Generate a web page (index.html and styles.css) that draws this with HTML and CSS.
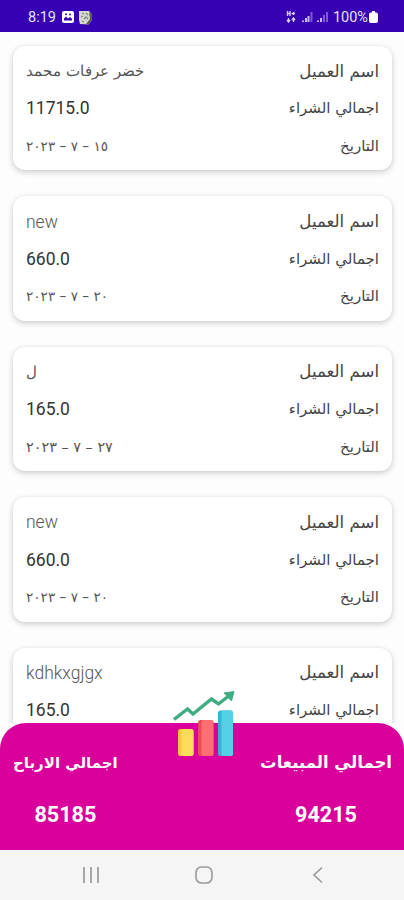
FILE: index.html
```
<!DOCTYPE html>
<html lang="ar">
  <head>
    <meta charset="UTF-8">
    <title>المبيعات</title>
    <link rel="stylesheet" href="styles.css">
  </head>

  <body>
    <div id="status">
      <span class="time">8:19</span>
      <svg class="picture" width="12" height="12" viewBox="0 0 12 12">
        <rect width="12" height="12" rx="2" fill="#fff"/>
        <path d="M2 9.5V7.5L4 5.5L6 7.5L8 6L10 8V9.5Z" fill="#3700b3"/>
        <circle cx="4" cy="3.3" r="1" fill="#3700b3"/>
        <circle cx="8" cy="3.6" r="1" fill="#3700b3"/>
      </svg>
      <svg class="ball" width="15" height="15" viewBox="0 0 15 15">
        <path d="M1 1H11L14 4.500V10L10.500 14.500L2 14L1 10Z" fill="#d5d8cf"/>
        <path d="M11 2L14 4.500V10L10.500 14.500L8 14L12 9Z" fill="#5d5a4c"/>
        <path d="M4 3L6 4M8 3L10 5M3 7L5 6M6 9L8 7L10 9M4 11L6 12" stroke="#85887d" stroke-width="1.300" fill="none"/>
      </svg>
      <svg class="network" width="44" height="12" viewBox="0 0 44 12">
        <path d="M1.500 0V5M1.500 2.500H4M4 0V5M5.500 2.500H9M7.500 1V4M2.500 7V11M1 9L2.500 11L4 9M7.500 11V7M6 9L7.500 7L9 9" stroke="#d9ccf1" stroke-width="1.400" fill="none"/>
        <path d="M17 11V9.500M20 11V7M22.500 11V5M32 11V9.500M35 11V7" stroke="#cbbbec" stroke-width="2" fill="none"/>
        <path d="M25.500 11V1M38 11V4M41 11V1" stroke="#7d58ce" stroke-width="2" fill="none"/>
      </svg>
      <span class="percent">100%</span>
      <svg class="battery" width="9" height="12" viewBox="0 0 9 12">
        <path d="M3 0H6V1.500H7Q9 1.500 9 3.500V10Q9 12 7 12H2Q0 12 0 10V3.500Q0 1.500 2 1.500H3Z" fill="#fff"/>
      </svg>
    </div>

    <div id="list">
      <div class="card">
        <div class="row"><span class="name ar" dir="rtl">خضر عرفات محمد</span><span class="label client" dir="rtl">اسم العميل</span></div>
        <div class="row"><span class="amount">11715.0</span><span class="label" dir="rtl">اجمالي الشراء</span></div>
        <div class="row"><span class="date" dir="rtl">١٥ – ٧ – ٢٠٢٣</span><span class="label" dir="rtl">التاريخ</span></div>
      </div>
      <div class="card">
        <div class="row"><span class="name">new</span><span class="label client" dir="rtl">اسم العميل</span></div>
        <div class="row"><span class="amount">660.0</span><span class="label" dir="rtl">اجمالي الشراء</span></div>
        <div class="row"><span class="date" dir="rtl">٢٠ – ٧ – ٢٠٢٣</span><span class="label" dir="rtl">التاريخ</span></div>
      </div>
      <div class="card">
        <div class="row"><span class="name ar" dir="rtl">ل</span><span class="label client" dir="rtl">اسم العميل</span></div>
        <div class="row"><span class="amount">165.0</span><span class="label" dir="rtl">اجمالي الشراء</span></div>
        <div class="row"><span class="date wide" dir="rtl">٢٧ – ٧ – ٢٠٢٣</span><span class="label" dir="rtl">التاريخ</span></div>
      </div>
      <div class="card">
        <div class="row"><span class="name">new</span><span class="label client" dir="rtl">اسم العميل</span></div>
        <div class="row"><span class="amount">660.0</span><span class="label" dir="rtl">اجمالي الشراء</span></div>
        <div class="row"><span class="date" dir="rtl">٢٠ – ٧ – ٢٠٢٣</span><span class="label" dir="rtl">التاريخ</span></div>
      </div>
      <div class="card">
        <div class="row"><span class="name">kdhkxgjgx</span><span class="label client" dir="rtl">اسم العميل</span></div>
        <div class="row"><span class="amount">165.0</span><span class="label" dir="rtl">اجمالي الشراء</span></div>
      </div>
    </div>

    <div id="totals">
      <div class="total profit">
        <div class="total__title" dir="rtl">اجمالي الارباح</div>
        <div class="total__value">85185</div>
      </div>
      <div class="total sales">
        <div class="total__title" dir="rtl">اجمالي المبيعات</div>
        <div class="total__value">94215</div>
      </div>
      <svg id="chart" width="64" height="66" viewBox="0 0 64 66">
        <path d="M2 29.500L15.500 19L21 24L39.500 9L46.500 14L58 5" stroke="#40ac82" stroke-width="3.400" fill="none"/>
        <path d="M52 3L62 1.500L59.500 11Z" fill="#40ac82" stroke="#40ac82" stroke-linejoin="round"/>
        <rect x="6" y="39" width="15.500" height="27" rx="2.500" fill="#f9c842"/>
        <rect x="9.500" y="39" width="12" height="27" rx="2.500" fill="#fddb5b"/>
        <rect x="26" y="30" width="15.500" height="36" rx="2.500" fill="#e94e58"/>
        <rect x="29.500" y="30" width="12" height="36" rx="2.500" fill="#ff6f71"/>
        <rect x="46" y="20.500" width="15" height="45.500" rx="2.500" fill="#35b4d2"/>
        <rect x="49.500" y="20.500" width="11.500" height="45.500" rx="2.500" fill="#55d0e4"/>
      </svg>
    </div>

    <div id="nav">
      <svg width="18" height="18" viewBox="0 0 18 18">
        <path d="M2 1V17M9 1V17M16 1V17" stroke="#999" stroke-width="1.700"/>
      </svg>
      <svg width="18" height="18" viewBox="0 0 18 18">
        <rect x="1" y="1" width="16" height="16" rx="5.500" stroke="#999" stroke-width="1.600" fill="none"/>
      </svg>
      <svg width="18" height="18" viewBox="0 0 18 18">
        <path d="M14 1.500L6 9L14 16.500" stroke="#999" stroke-width="1.600" fill="none"/>
      </svg>
    </div>
  </body>
</html>
```
FILE: styles.css
```
* {
  box-sizing: border-box;
}
html, body {
  margin: 0;
  padding: 0;
  height: 900px;
  width: 404px;
  overflow: hidden;
}
body {
  display: flex;
  flex-direction: column;
  background: #fdfdfd;
  font-family: Roboto, "DejaVu Sans", sans-serif;
}

#status {
  display: flex;
  align-items: center;
  flex: none;
  height: 32px;
  padding: 2px 26px 0 28px;
  background: #3700b3;
  color: #e9e1f8;
  font-size: 14.5px;
}
.time {
  width: 34px;
}
.ball {
  margin-left: 4px;
}
.network {
  margin-left: auto;
}
.percent {
  margin: 0 1px 0 3px;
}

#list {
  display: flex;
  flex-direction: column;
  flex: none;
  gap: 26px;
  height: 691px;
  padding: 14px 12px 0 13px;
  overflow: hidden;
}
.card {
  flex: none;
  height: 124.4px;
  padding: 6.5px 13px 0;
  border-radius: 12px;
  background: #fff;
  box-shadow: 0 2px 6px rgba(0,0,0,0.2), 0 0 2px rgba(0,0,0,0.06);
}
.row {
  display: flex;
  align-items: center;
  justify-content: space-between;
  height: 37.3px;
  color: #555;
}
.label, .date, .ar {
  font-family: "DejaVu Sans", sans-serif;
  font-size: 15px;
}
.label {
  color: #444;
}
.label.client {
  font-size: 16.6px;
}
.name {
  font-size: 17.5px;
  font-weight: 300;
}
.name.ar {
  font-size: 15px;
}
.date {
  font-size: 13.6px;
}
.date.wide {
  font-size: 14.4px;
}
.amount {
  color: #333;
  font-size: 17.5px;
}

#totals {
  position: relative;
  display: flex;
  justify-content: space-between;
  flex: none;
  height: 127px;
  padding: 27px 12px 0 13px;
  border-radius: 26px 26px 0 0;
  background: #d9009b;
  color: #fff;
  font-weight: bold;
  text-align: center;
}
.total__title {
  height: 26px;
  line-height: 26px;
  font-family: "DejaVu Sans", sans-serif;
  font-size: 16.5px;
}
.profit .total__title {
  font-size: 15px;
}
.total__value {
  margin-top: 26px;
  line-height: 26px;
  font-size: 21.6px;
}
#chart {
  position: absolute;
  left: 172px;
  top: -33px;
}

#nav {
  display: flex;
  align-items: center;
  justify-content: space-between;
  flex: 1;
  padding: 0 78px 0 82px;
  background: #f5f5f5;
}
```
